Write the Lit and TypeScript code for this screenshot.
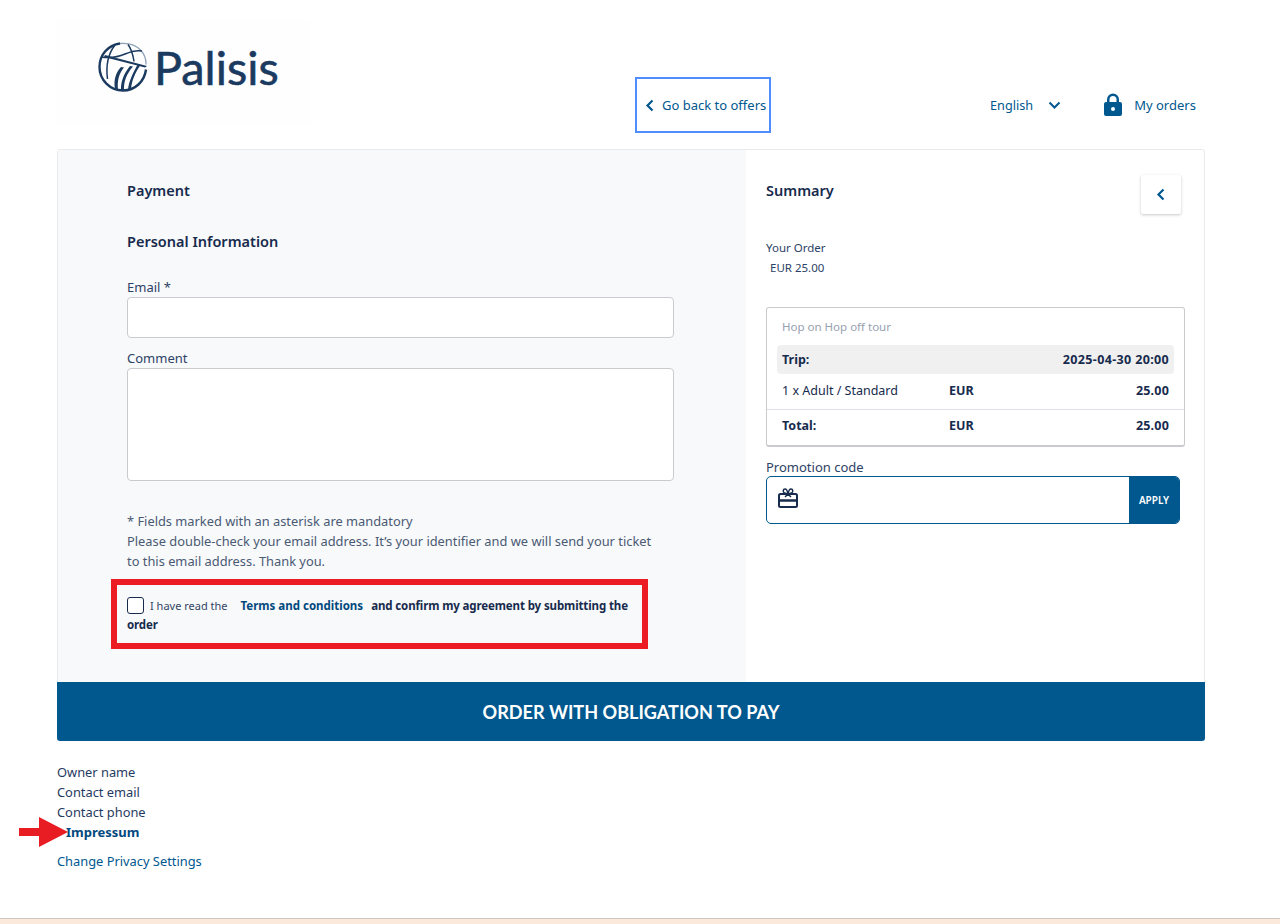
import { LitElement, html, css } from "lit";
import { customElement } from "lit/decorators.js";

@customElement("app-root")
export class AppRoot extends LitElement {
  static styles = css`
    :host { display: block; position: relative; height: 924px; overflow: hidden; background: #fff; color: #172b4d; font-family: "Noto Sans", "Open Sans", sans-serif; font-size: 13px; line-height: 20px; }
    * { box-sizing: border-box; }
    .page { padding: 0 75px 0 57px; height: 918px; }
    header { height: 149px; display: flex; align-items: flex-start; }
    .logo { width: 253px; height: 105px; margin-top: 20px; background: #fefefe; display: flex; align-items: center; gap: 6px; padding: 0 0 11px 41px; }
    .logo span { font-family: "Lato", sans-serif; font-size: 46.8px; line-height: 50px; color: #1b3a5f; -webkit-text-stroke: 0.6px #1b3a5f; }
    .back { margin: 77px 0 0 325px; width: 136px; height: 56px; border: 2px solid #4f8dff; display: flex; align-items: center; gap: 7px; padding-left: 8px; color: #00588f; white-space: nowrap; font-size: 13px; }
    .lang { margin: 95px 0 0 219px; display: flex; align-items: center; gap: 15px; color: #00588f; font-size: 12.7px; }
    .orders { margin: 93px 0 0 43px; display: flex; align-items: center; gap: 12px; color: #00588f; }
    .card { height: 592px; width: 1148px; border: 1px solid #e9eaec; border-radius: 3px; display: flex; flex-wrap: wrap; position: relative; background: #fff; }
    .left { width: 688px; height: 532px; background: #f8f9fb; padding: 30px 72px 0 69px; }
    .right { width: 458px; height: 532px; padding: 30px 20px 0 20px; }
    h2 { margin: 0; font-size: 14.5px; line-height: 20px; font-weight: 600; }
    .h2b { margin-top: 31px; }
    label { display: block; color: #2c4266; }
    .lb1 { margin-top: 26px; }
    .lb2 { margin-top: 10px; }
    .input { height: 41px; background: #fff; border: 1px solid #c9cbce; border-radius: 4px; }
    .ta { height: 113px; }
    .notes { margin-top: 30px; color: #4a5a73; font-size: 12.85px; white-space: nowrap; }
    .terms { margin-top: 25px; padding-right: 29px; font-size: 11.5px; line-height: 19px; font-weight: 700; }
    .cb { display: inline-block; width: 17px; height: 17px; border: 1px solid #172b4d; border-radius: 3px; vertical-align: -4px; margin-right: 6px; background: #fff; }
    .terms .plain { font-weight: 400; margin-right: 10px; color: #344563; font-size: 11px; }
    .terms a { color: #00497e; margin-right: 5px; }
    .agree { letter-spacing: -0.12px; }
    .submit { width: calc(100% + 2px); margin: 0 -1px -1px; height: 59px; background: #00588f; color: #fff; font-size: 18.1px; font-family: "Lato", sans-serif; font-weight: 700; display: flex; align-items: center; justify-content: center; border-radius: 0 0 3px 3px; }
    .sumhead { display: flex; justify-content: space-between; align-items: flex-start; height: 58px; }
    .collapse { width: 40px; height: 39px; margin: -5px 3px 0 0; background: #fff; box-shadow: 0 1px 3px rgba(0,0,0,.22); display: flex; align-items: center; justify-content: center; border-radius: 2px; }
    .yo { font-size: 11.5px; color: #2c4266; }
    .yo div:last-child { padding-left: 4px; }
    .box { margin-top: 29px; width: 419px; height: 140px; border: 1px solid #c9cbce; border-bottom-width: 2px; border-radius: 3px; padding-top: 9px; font-size: 12.5px; }
    .title { padding-left: 15px; color: #97a0af; font-size: 11.5px; }
    .row { display: grid; grid-template-columns: 167px 1fr auto; align-items: center; padding: 0 15px; font-weight: 700; }
    .trip { margin: 8px 10px 0; padding: 0 5px; height: 29px; background: #f0f0f0; border-radius: 4px; grid-template-columns: 1fr auto; }
    .date { letter-spacing: 0.35px; }
    .amt { letter-spacing: 0.2px; }
    .line { height: 36px; padding-bottom: 2px; border-bottom: 1px solid #dfe1e6; }
    .line .n { font-weight: 400; }
    .total { height: 34px; padding-bottom: 2px; }
    .promo-l { margin-top: 10px; color: #2c4266; }
    .promo { display: flex; width: 414px; height: 48px; border: 1px solid #00588f; border-radius: 5px; overflow: hidden; margin-top: -1px; align-items: stretch; background: #fff; }
    .promo .ic { flex: 1; padding: 0 0 5px 11px; display: flex; align-items: center; }
    .apply { width: 50px; background: #00588f; color: #fff; font-size: 10px; font-weight: 600; display: flex; align-items: center; justify-content: center; }
    footer { margin-top: 21px; font-size: 12.85px; color: #1f3a5f; }
    footer a { color: #00588f; display: block; }
    footer .imp { font-weight: 700; font-size: 13px; padding-left: 9px; color: #00497e; }
    .priv { margin-top: 9px; }
    .strip { height: 6px; background: #fbeadb; border-top: 1px solid #cfc6bd; }
    .redbox { position: absolute; left: 53px; top: 429px; width: 537px; height: 70px; border: 6px solid #ec1c24; }
    .arrow { position: absolute; left: 19px; top: 817px; }
  `;

  render() {
    return html`
      <div class="page">
        <header>
          <div class="logo">
            <svg width="50" height="50" viewBox="0 0 50 50" fill="none" stroke="#1b3a5f">
              <path d="M22 1.500C10 3 1.500 13 1.500 25c0 13 10.500 23.500 23.500 23.500 12 0 21.500-9 23-21" stroke-width="2.400"/>
              <path d="M22 1.500c8-.8 16 1.500 21 7 3.500 4 5.200 9 5 14" stroke="#8fa2b8" stroke-width="1.300"/>
              <path d="M17 3C10 12 7.500 22 9.500 37M30 2.500c3 4 5 10 6 17M3 15c7 1 15 1 24-3 6-2.500 12-4 17-3" stroke-width="1.500"/>
              <path d="M17 47c-1.500-9 .5-16 6-22l3 .5c-5 6-7 13-6 22.500zM23 49c-.5-9 2.500-17 9-25l3 .5c-6.500 7.500-9.500 15-9 24.500zM30 47.500c1-8 4-15 10-25.500l2.500 1c-5.500 8-8.500 15-9.500 24z" fill="#1b3a5f" stroke="none"/>
              <path d="M7 13l42 11-2 1.500L6 15z" fill="#1b3a5f" stroke="none"/>
            </svg>
            <span>Palisis</span>
          </div>
          <div class="back">
            <svg width="10" height="13" viewBox="0 0 10 13" fill="none" stroke="#00588f" stroke-width="2.200"><path d="M7.500 1.500L2.500 6.500 7.500 11.500"/></svg>
            Go back to offers
          </div>
          <div class="lang">English
            <svg width="13" height="9" viewBox="0 0 13 9" fill="none" stroke="#00588f" stroke-width="2"><path d="M1.500 1.500L6.500 6.500 11.500 1.500"/></svg>
          </div>
          <div class="orders">
            <svg width="18" height="24" viewBox="0 0 18 24"><path fill="#00588f" d="M3 9V6.500a6 6 0 0 1 12 0V9h1a2 2 0 0 1 2 2v10a2 2 0 0 1-2 2H2a2 2 0 0 1-2-2V11a2 2 0 0 1 2-2zm2.500 0h7V6.500a3.500 3.500 0 0 0-7 0z"/><circle cx="9" cy="16" r="2" fill="#fff"/></svg>
            My orders
          </div>
        </header>
        <div class="card">
          <div class="left">
            <h2>Payment</h2>
            <h2 class="h2b">Personal Information</h2>
            <label class="lb1">Email *</label>
            <div class="input"></div>
            <label class="lb2">Comment</label>
            <div class="input ta"></div>
            <div class="notes">* Fields marked with an asterisk are mandatory<br>Please double-check your email address. It’s your identifier and we will send your ticket<br>to this email address. Thank you.</div>
            <div class="terms"><span class="cb"></span><span class="plain">I have read the</span> <a>Terms and conditions</a> <span class="agree">and confirm my agreement by submitting the order</span></div>
          </div>
          <div class="right">
            <div class="sumhead"><h2>Summary</h2>
              <div class="collapse"><svg width="10" height="13" viewBox="0 0 10 13" fill="none" stroke="#00588f" stroke-width="2.200"><path d="M7.500 1.500L2.500 6.500 7.500 11.500"/></svg></div>
            </div>
            <div class="yo"><div>Your Order</div><div>EUR 25.00</div></div>
            <div class="box">
              <div class="title">Hop on Hop off tour</div>
              <div class="row trip"><span>Trip:</span><span class="date">2025-04-30 20:00</span></div>
              <div class="row line"><span class="n">1 x Adult / Standard</span><span>EUR</span><span class="amt">25.00</span></div>
              <div class="row total"><span>Total:</span><span>EUR</span><span class="amt">25.00</span></div>
            </div>
            <div class="promo-l">Promotion code</div>
            <div class="promo">
              <div class="ic"><svg width="20" height="20" viewBox="0 0 20 20" fill="none" stroke="#172b4d" stroke-width="2"><rect x="1" y="6" width="18" height="13" rx="1.500"/><path d="M1 12.500h18" stroke-width="2.600"/><path d="M10 6L6.500 5C4.500 4 5 1 7 1c1.500 0 2.500 2 3 5 .5-3 1.500-5 3-5 2 0 2.500 3 .5 4zM10 6L7 9M10 6l3 3" stroke-width="1.500"/></svg></div>
              <div class="apply">APPLY</div>
            </div>
          </div>
          <div class="submit">ORDER WITH OBLIGATION TO PAY</div>
          <div class="redbox"></div>
        </div>
        <footer>
          <div>Owner name</div><div>Contact email</div><div>Contact phone</div>
          <a class="imp">Impressum</a>
          <a class="priv">Change Privacy Settings</a>
        </footer>
      </div>
      <div class="strip"></div>
      <svg class="arrow" width="50" height="31" viewBox="0 0 50 31"><path fill="#e81c23" d="M0 11h20V0l29 15L20 30V19H0z"/></svg>
    `;
  }
}
